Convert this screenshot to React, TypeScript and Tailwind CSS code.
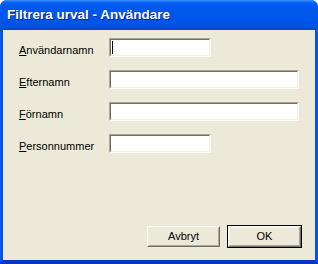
const fields = [
  { key: "A", rest: "nvändarnamn", wide: false, caret: true },
  { key: "E", rest: "fternamn", wide: true, caret: false },
  { key: "F", rest: "örnamn", wide: true, caret: false },
  { key: "P", rest: "ersonnummer", wide: false, caret: false },
];

function TextBox({ wide, caret }: { wide: boolean; caret: boolean }) {
  return (
    <div
      className={`relative h-[19px] border border-t-[#aca899] border-l-[#aca899] border-b-white border-r-white bg-white ${
        wide ? "w-[190px]" : "w-[102px]"
      }`}
    >
      <div className="h-full w-full border border-t-[#716f64] border-l-[#716f64] border-b-[#f1efe2] border-r-[#f1efe2]">
        {caret && <div className="ml-[1px] mt-[1px] h-[13px] w-[1px] bg-black" />}
      </div>
    </div>
  );
}

function Button({ label, isDefault }: { label: string; isDefault?: boolean }) {
  return (
    <div
      className={`h-[23px] w-[75px] ${
        isDefault ? "border border-black" : "border border-transparent"
      }`}
    >
      <div className="h-full w-full border border-t-white border-l-white border-b-[#716f64] border-r-[#716f64]">
        <div className="flex h-full w-full items-center justify-center border border-t-[#f1efe2] border-l-[#f1efe2] border-b-[#aca899] border-r-[#aca899] bg-[#ece9d8] text-[11px] text-black">
          {label}
        </div>
      </div>
    </div>
  );
}

export default function App() {
  return (
    <div
      className="flex h-[264px] w-[318px] flex-col overflow-hidden rounded-t-[7px] bg-[#0054e3]"
      style={{ fontFamily: '"Liberation Sans", Arial, sans-serif' }}
    >
      <div className="flex h-[30px] shrink-0 items-center bg-[linear-gradient(180deg,#3d95ff_0%,#0a62f5_8%,#0058ee_20%,#0056ea_60%,#0053e4_85%,#0046cc_100%)] pl-[7px]">
        <span className="text-[13.5px] font-bold text-white [text-shadow:1px_1px_0_#0a1e8c]">
          Filtrera urval - Användare
        </span>
      </div>
      <div className="flex flex-1 border-x-[3px] border-b-[4px] border-x-[#0055ea] border-b-[#0834c8]">
        <div className="flex flex-1 flex-col bg-[#ece9d8] pb-[12px] pl-[16px] pr-[13px] pt-[8px]">
          <div className="flex flex-col gap-[13px]">
            {fields.map((f) => (
              <div key={f.key} className="flex items-end">
                <span className="w-[90px] text-[11px] leading-[13px] text-black">
                  <span className="underline">{f.key}</span>
                  {f.rest}
                </span>
                <TextBox wide={f.wide} caret={f.caret} />
              </div>
            ))}
          </div>
          <div className="mt-auto flex justify-end gap-[6px]">
            <Button label="Avbryt" />
            <Button label="OK" isDefault />
          </div>
        </div>
      </div>
    </div>
  );
}
